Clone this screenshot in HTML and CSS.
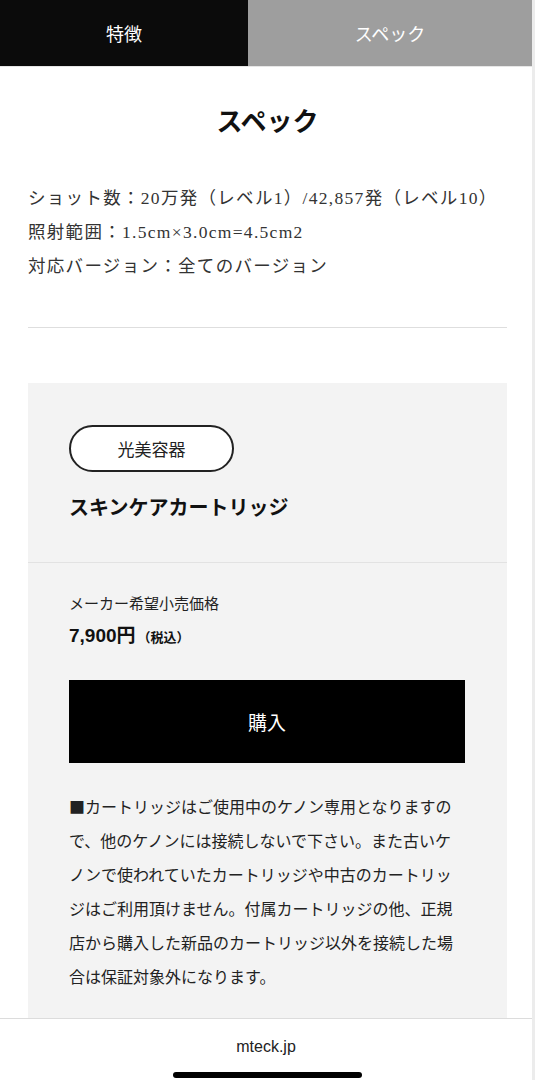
FILE: index.html
```html
<!DOCTYPE html>
<html lang="ja">
<head>
<meta charset="utf-8">
<link rel="stylesheet" href="styles.css">
</head>
<body>
<div class="page">
  <nav class="tabs">
    <div class="tab tab-active">特徴</div>
    <div class="tab tab-inactive">スペック</div>
  </nav>
  <main class="content">
    <h1 class="title">スペック</h1>
    <div class="specs">
      <p>ショット数：20万発（レベル1）/42,857発（レベル10）</p>
      <p>照射範囲：1.5cm×3.0cm=4.5cm2</p>
      <p>対応バージョン：全てのバージョン</p>
    </div>
    <hr class="divider">
    <section class="card">
      <div class="card-head">
        <span class="pill">光美容器</span>
        <h2 class="product">スキンケアカートリッジ</h2>
      </div>
      <div class="card-body">
        <p class="price-label">メーカー希望小売価格</p>
        <p class="price">7,900円<span class="tax">（税込）</span></p>
        <button class="buy">購入</button>
        <p class="note">■カートリッジはご使用中のケノン専用となりますので、他のケノンには接続しないで下さい。また古いケノンで使われていたカートリッジや中古のカートリッジはご利用頂けません。付属カートリッジの他、正規店から購入した新品のカートリッジ以外を接続した場合は保証対象外になります。</p>
      </div>
    </section>
  </main>
  <footer class="footer">
    <span class="domain">mteck.jp</span>
    <span class="home-bar"></span>
  </footer>
</div>
</body>
</html>
```

FILE: styles.css
```css
* { box-sizing: border-box; }
html, body {
  margin: 0;
  padding: 0;
  background: #fff;
}
body {
  font-family: "Noto Sans CJK JP", "Noto Sans", sans-serif;
  color: #111;
  height: 1080px;
  overflow: hidden;
}
.page {
  height: 1080px;
  display: flex;
  flex-direction: column;
  border-right: 3px solid #ececec;
  position: relative;
}
.tabs {
  display: flex;
  height: 67px;
  flex: none;
  border-bottom: 1px solid #e6e6e6;
}
.tab {
  display: flex;
  align-items: center;
  justify-content: center;
  color: #fff;
  font-size: 18px;
}
.tab-active {
  width: 248px;
  background: #0b0b0b;
}
.tab-inactive {
  flex: 1;
  background: #9e9e9e;
}
.content {
  flex: 1;
  padding: 0 25px 0 28px;
  overflow: hidden;
}
.title {
  margin: 34px 0 0;
  text-align: center;
  font-size: 26px;
  font-weight: 700;
  line-height: 38px;
  color: #111;
}
.specs {
  margin-top: 42px;
  font-family: "Liberation Serif", "Noto Sans CJK JP", serif;
  font-size: 17.5px;
  color: #333;
  letter-spacing: 1.3px;
}
.specs p {
  margin: 0;
  line-height: 34px;
  white-space: nowrap;
}
.divider {
  border: 0;
  border-top: 1px solid #dedede;
  margin: 44px 0 0;
}
.card {
  margin-top: 55px;
  background: #f3f3f3;
}
.card-head {
  padding: 42px 41px 38px;
  border-bottom: 1px solid #e2e2e2;
}
.pill {
  display: inline-flex;
  align-items: center;
  justify-content: center;
  width: 165px;
  height: 47px;
  border: 2px solid #222;
  border-radius: 24px;
  background: #fff;
  font-size: 17px;
  color: #222;
}
.product {
  margin: 18px 0 0;
  font-size: 20px;
  font-weight: 700;
  line-height: 34px;
  color: #111;
}
.card-body {
  padding: 26px 42px 40px 41px;
}
.price-label {
  margin: 0;
  font-size: 15px;
  line-height: 28px;
  color: #222;
}
.price {
  margin: 4px 0 0;
  font-family: "Liberation Sans", "Noto Sans CJK JP", sans-serif;
  font-size: 19px;
  font-weight: 700;
  line-height: 30px;
  color: #111;
}
.tax {
  font-size: 13px;
  font-family: "Noto Sans CJK JP", sans-serif;
  margin-left: 2px;
}
.buy {
  display: block;
  width: 100%;
  height: 83px;
  margin-top: 28px;
  border: 0;
  background: #000;
  color: #fff;
  font-family: "Noto Sans CJK JP", sans-serif;
  font-size: 19px;
}
.note {
  margin: 26px 0 0;
  font-size: 16px;
  line-height: 34px;
  color: #222;
}
.footer {
  position: absolute;
  left: 0;
  right: 0;
  bottom: 0;
  height: 62px;
  background: #fff;
  border-top: 1px solid #dcdcdc;
  display: flex;
  flex-direction: column;
  align-items: center;
}
.domain {
  margin-top: 19px;
  font-family: "Liberation Sans", Arial, sans-serif;
  font-size: 16px;
  color: #222;
}
.home-bar {
  position: absolute;
  bottom: 2px;
  left: 173px;
  width: 189px;
  height: 6px;
  border-radius: 3px;
  background: #000;
}
```
